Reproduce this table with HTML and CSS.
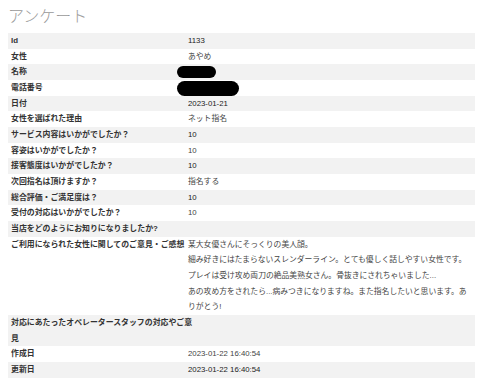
FILE: index.html
```html
<!DOCTYPE html>
<html lang="ja">
<head>
<meta charset="utf-8">
<title>アンケート</title>
<link rel="stylesheet" href="styles.css">
</head>
<body>
<div class="page">
  <h1 class="title">アンケート</h1>
  <div class="table">
    <div class="row"><div class="label">Id</div><div class="value">1133</div></div>
    <div class="row"><div class="label">女性</div><div class="value">あやめ</div></div>
    <div class="row"><div class="label">名称</div><div class="value"><span class="redact redact-name"></span></div></div>
    <div class="row"><div class="label">電話番号</div><div class="value"><span class="redact redact-phone"></span></div></div>
    <div class="row"><div class="label">日付</div><div class="value">2023-01-21</div></div>
    <div class="row"><div class="label">女性を選ばれた理由</div><div class="value">ネット指名</div></div>
    <div class="row"><div class="label">サービス内容はいかがでしたか？</div><div class="value">10</div></div>
    <div class="row"><div class="label">容姿はいかがでしたか？</div><div class="value">10</div></div>
    <div class="row"><div class="label">接客態度はいかがでしたか？</div><div class="value">10</div></div>
    <div class="row"><div class="label">次回指名は頂けますか？</div><div class="value">指名する</div></div>
    <div class="row"><div class="label">総合評価・ご満足度は？</div><div class="value">10</div></div>
    <div class="row"><div class="label">受付の対応はいかがでしたか？</div><div class="value">10</div></div>
    <div class="row"><div class="label">当店をどのようにお知りになりましたか?</div><div class="value"></div></div>
    <div class="row"><div class="label">ご利用になられた女性に関してのご意見・ご感想</div><div class="value">某大女優さんにそっくりの美人顔。<br>細み好きにはたまらないスレンダーライン。とても優しく話しやすい女性です。<br>プレイは受け攻め両刀の絶品美熟女さん。骨抜きにされちゃいました...<br>あの攻め方をされたら...病みつきになりますね。また指名したいと思います。ありがとう!</div></div>
    <div class="row row-wide"><div class="label">対応にあたったオペレータースタッフの対応やご意見</div></div>
    <div class="row"><div class="label">作成日</div><div class="value">2023-01-22 16:40:54</div></div>
    <div class="row"><div class="label">更新日</div><div class="value">2023-01-22 16:40:54</div></div>
  </div>
</div>
</body>
</html>
```
FILE: styles.css
```css
html, body {
  margin: 0;
  padding: 0;
  background: #ffffff;
}

.page {
  padding: 4px 5px 0 8px;
  font-family: "Liberation Sans", "Noto Sans CJK JP", sans-serif;
  color: #333333;
}

.title {
  margin: 0 0 7px 0;
  font-family: "Noto Sans CJK JP", sans-serif;
  font-size: 16px;
  line-height: 22px;
  font-weight: 300;
  color: #999999;
}

.table {
  display: flex;
  flex-direction: column;
}

.row {
  display: grid;
  grid-template-columns: 179px 1fr;
  line-height: 15.67px;
}

.row:nth-child(odd) {
  background: #f2f2f2;
}

.label {
  padding-left: 3px;
  font-size: 7.9px;
  font-weight: 600;
  color: #333333;
  white-space: nowrap;
}

.value {
  padding-left: 1px;
  padding-right: 6px;
  font-size: 7.8px;
  color: #444444;
}

.row:nth-child(odd) .value {
  color: #222222;
}

.row-wide {
  display: block;
  background: linear-gradient(#ffffff 50%, #f2f2f2 50%);
}

.row-wide .label {
  white-space: normal;
  width: 186px;
}

.redact {
  display: inline-block;
  vertical-align: top;
  background: #000000;
  border-radius: 8px;
}

.redact-name {
  width: 39px;
  height: 12px;
  margin: 2px 0 0 -11px;
}

.redact-phone {
  width: 62px;
  height: 15px;
  margin: 1px 0 -1px -11px;
}
```
